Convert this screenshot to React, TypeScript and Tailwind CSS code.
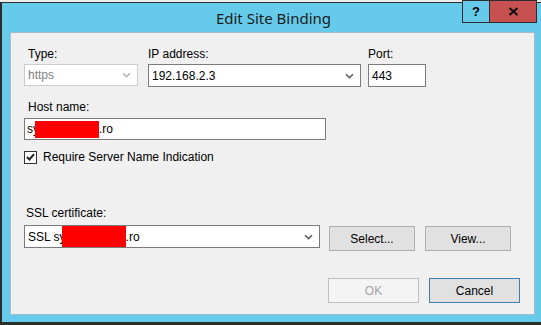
import React from "react";

const Chevron = ({ color = "#606060" }: { color?: string }) => (
  <svg width="9" height="6" viewBox="0 0 9 6" className="shrink-0">
    <path d="M1 1.2 L4.5 4.6 L8 1.2" fill="none" stroke={color} strokeWidth="1.6" />
  </svg>
);

const Combo = ({
  width,
  height = "h-[23px]",
  disabled = false,
  children,
}: {
  width: string;
  height?: string;
  disabled?: boolean;
  children: React.ReactNode;
}) => (
  <div
    className={`${width} ${height} flex items-center justify-between bg-white border pl-[3px] pr-[6px] overflow-hidden ${
      disabled ? "border-[#cccccc] text-[#838383]" : "border-[#7a7a7a] text-black"
    }`}
  >
    <div className="flex items-center h-full">{children}</div>
    <Chevron color={disabled ? "#b4b4b4" : "#606060"} />
  </div>
);

const Button = ({
  label,
  width,
  variant = "normal",
}: {
  label: string;
  width: string;
  variant?: "normal" | "default" | "disabled";
}) => {
  const look =
    variant === "disabled"
      ? "bg-[#f4f4f4] border-[#bfbfbf] text-[#a3a3a3]"
      : variant === "default"
      ? "bg-[#e1e1e1] border-[#3c7fb1] text-black"
      : "bg-[#e1e1e1] border-[#adadad] text-black";
  return (
    <div className={`${width} h-[25px] border flex items-center justify-center ${look}`}>
      {label}
    </div>
  );
};

export default function App() {
  return (
    <div className="w-[541px] h-[325px] overflow-hidden bg-[#ececec] text-[12px] leading-[16px] font-['Liberation_Sans',Arial,sans-serif] text-black">
      <div className="relative mt-[2px] w-[545px] h-[323px] border-l-2 border-t border-b-[3px] border-[#2d2d2d] bg-[#66cbea] flex flex-col">
        {/* caption buttons */}
        <div className="absolute top-[-3px] left-[460px] flex h-[23px] border border-[#2d2d2d]">
          <div className="w-[27px] h-full bg-[#66cbea] border-r border-[#2d2d2d] flex items-center justify-center text-[13px] font-bold">
            ?
          </div>
          <div className="w-[46px] h-full bg-[#c75050] flex items-center justify-center">
            <svg width="11" height="9" viewBox="0 0 11 9">
              <path d="M1.5 1 L9.5 8 M9.5 1 L1.5 8" stroke="#111" strokeWidth="2.2" />
            </svg>
          </div>
        </div>

        <div className="h-[29px] flex items-center justify-center text-[15px] leading-[29px] pt-[1px] text-[#1b1b1b] font-['Noto_Sans',sans-serif]">
          Edit Site Binding
        </div>

        <div className="ml-[8px] w-[525px] h-[283px] bg-[#f0f0f0] border border-[#a4bccb] pt-[13px] pl-[13px] flex flex-col">
          {/* row 1 */}
          <div className="flex">
            <div className="w-[114px] flex flex-col">
              <div className="pl-[4px]">Type:</div>
              <div className="mt-[2px]">
                <Combo width="w-[114px]" height="h-[22px]" disabled>
                  https
                </Combo>
              </div>
            </div>
            <div className="w-[213px] ml-[10px] flex flex-col">
              <div>IP address:</div>
              <div className="mt-[2px]">
                <Combo width="w-[213px]">192.168.2.3</Combo>
              </div>
            </div>
            <div className="w-[58px] ml-[7px] flex flex-col">
              <div>Port:</div>
              <div className="mt-[2px] w-[58px] h-[23px] bg-white border border-[#7a7a7a] pl-[3px] flex items-center">
                443
              </div>
            </div>
          </div>

          {/* host name */}
          <div className="mt-[12px] pl-[4px]">Host name:</div>
          <div className="mt-[3px] w-[302px] h-[22px] bg-white border border-[#7a7a7a] pl-[2px] flex items-center">
            <span>sy</span>
            <span className="inline-block w-[64px] h-[17px] bg-[#ff0000] ml-[-4px]" />
            <span>.ro</span>
          </div>

          {/* checkbox */}
          <div className="mt-[9px] flex items-center">
            <div className="w-[13px] h-[13px] border border-[#333] bg-white flex items-center justify-center">
              <svg width="9" height="8" viewBox="0 0 9 8">
                <path d="M1 4 L3.5 6.5 L8 1.2" fill="none" stroke="#222" strokeWidth="2" />
              </svg>
            </div>
            <span className="ml-[6px]">Require Server Name Indication</span>
          </div>

          {/* ssl certificate */}
          <div className="mt-[40px] pl-[2px]">SSL certificate:</div>
          <div className="mt-[4px] flex items-start">
            <Combo width="w-[296px]">
              <span>SSL sy</span>
              <span className="inline-block w-[64px] h-[22px] bg-[#ff0000] ml-[-4px]" />
              <span>.ro</span>
            </Combo>
            <div className="ml-[9px] mt-[1px]">
              <Button label="Select..." width="w-[86px]" />
            </div>
            <div className="ml-[10px] mt-[1px]">
              <Button label="View..." width="w-[86px]" />
            </div>
          </div>

          {/* dialog buttons */}
          <div className="mt-[27px] flex pl-[304px]">
            <Button label="OK" width="w-[91px]" variant="disabled" />
            <div className="ml-[10px]">
              <Button label="Cancel" width="w-[91px]" variant="default" />
            </div>
          </div>
        </div>
      </div>
    </div>
  );
}
